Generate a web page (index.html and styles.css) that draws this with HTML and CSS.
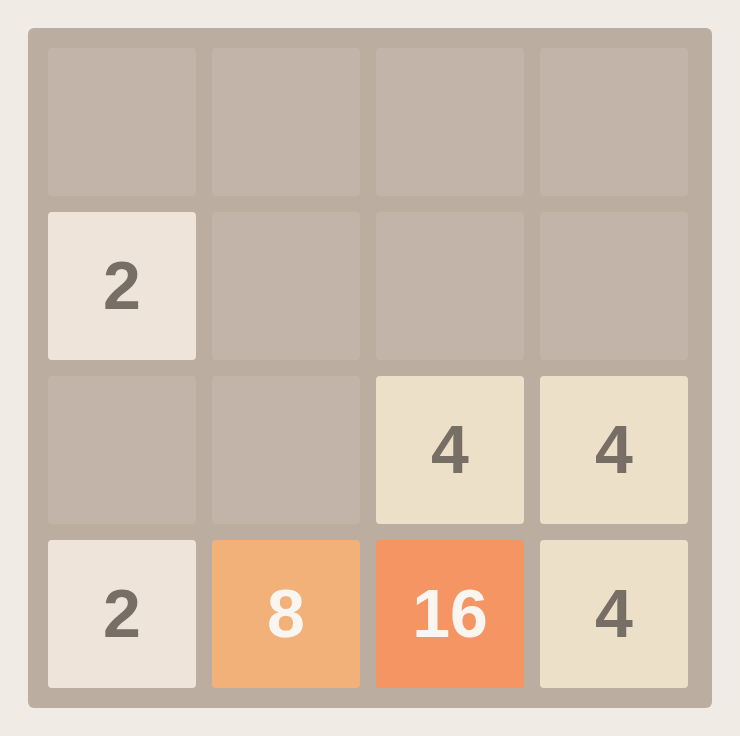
FILE: index.html
```html
<!DOCTYPE html>
<html lang="en">
<head>
    <meta charset="UTF-8">
    <meta name="viewport" content="width=device-width, initial-scale=1.0">
    <title>2048</title>
    <link rel="stylesheet" href="styles.css">
</head>
<body>
    <div class="board">
        <div class="grid">
            <div class="cell"></div>
            <div class="cell"></div>
            <div class="cell"></div>
            <div class="cell"></div>

            <div class="cell tile-2">2</div>
            <div class="cell"></div>
            <div class="cell"></div>
            <div class="cell"></div>

            <div class="cell"></div>
            <div class="cell"></div>
            <div class="cell tile-4">4</div>
            <div class="cell tile-4">4</div>

            <div class="cell tile-2">2</div>
            <div class="cell tile-8">8</div>
            <div class="cell tile-16">16</div>
            <div class="cell tile-4">4</div>
        </div>
    </div>
</body>
</html>
```

FILE: styles.css
```css
body {
    font-family: "Liberation Sans", Arial, sans-serif;
    background-color: #f0ebe4;
    margin: 0;
    padding: 28px;
}
.board {
    width: 684px;
    height: 680px;
    box-sizing: border-box;
    padding: 20px;
    background: #bbada0;
    border-radius: 6px;
}
.grid {
    display: grid;
    grid-template-columns: repeat(4, 148px);
    grid-template-rows: repeat(4, 148px);
    gap: 16px;
}
.cell {
    background: #c2b4a8;
    border-radius: 4px;
    display: flex;
    align-items: center;
    justify-content: center;
    padding-bottom: 3px;
    box-sizing: border-box;
    font-size: 68px;
    font-weight: bold;
    color: #776e65;
}
.tile-2 {
    background: #eee4da;
}
.tile-4 {
    background: #ede0c8;
}
.tile-8 {
    background: #f2b179;
    color: #f9f6f2;
}
.tile-16 {
    background: #f59563;
    color: #f9f6f2;
}
```
